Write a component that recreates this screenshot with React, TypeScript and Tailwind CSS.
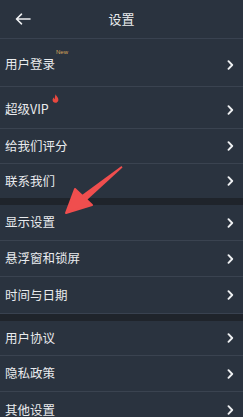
import React from 'react';

const font = { fontFamily: '"Noto Sans CJK SC", "Noto Sans", sans-serif' };

function Chevron() {
  return (
    <svg width="7" height="10" viewBox="0 0 7 10" className="shrink-0">
      <path d="M1.5 1.2 L5.2 5 L1.5 8.8" fill="none" stroke="#eef0f2" strokeWidth="1.9" strokeLinecap="round" strokeLinejoin="round" />
    </svg>
  );
}

function Row({ label, h, extra, last }: { label: string; h: string; extra?: React.ReactNode; last?: boolean }) {
  return (
    <div className={`flex items-center justify-between pl-[5px] pr-[9px] ${h} ${last ? '' : 'border-b border-[#3a4350]'}`}>
      <div className="relative flex items-center">
        <span className="text-[12.5px] text-[#e9ebee] leading-none">{label}</span>
        {extra}
      </div>
      <Chevron />
    </div>
  );
}

export default function App() {
  return (
    <div className="relative w-[243px] h-[417px] overflow-hidden bg-[#2a333f]" style={font}>
      {/* header */}
      <div className="relative flex items-center justify-center h-[39px] border-b border-[#394250]">
        <svg width="16" height="12" viewBox="0 0 16 12" className="absolute left-[15px] top-[13px]">
          <path d="M15 6 H1.8 M6.5 1.2 L1.5 6 L6.5 10.8" fill="none" stroke="#eef0f2" strokeWidth="1.6" strokeLinecap="round" strokeLinejoin="round" />
        </svg>
        <span className="text-[13px] text-[#e9ebee]">设置</span>
      </div>

      <Row
        label="用户登录"
        h="h-[48px] pt-[4px]"
        extra={<span className="absolute left-[51px] top-[-10px] text-[6px] text-[#d9a55a]" style={{ fontFamily: '"Liberation Sans", sans-serif' }}>New</span>}
      />
      <Row
        label="超级VIP"
        h="h-[42px] pt-[4px]"
        extra={
          <svg width="7" height="9" viewBox="0 0 7 9" className="absolute left-[47px] top-[-9px]">
            <path d="M3.6 0.3 C4 2 6.6 3.4 6.4 6 C6.2 7.9 4.8 8.8 3.4 8.8 C1.7 8.8 0.5 7.6 0.6 5.8 C0.7 4.5 1.5 3.8 1.9 3.4 C2 4.4 2.4 5 2.9 5.2 C2.6 3.6 3.2 1.8 3.6 0.3 Z" fill="#e8483f" />
          </svg>
        }
      />
      <Row label="给我们评分" h="h-[35px]" />
      <Row label="联系我们" h="h-[34px]" last />

      <div className="h-[7px] bg-[#1f242b]" />

      <Row label="显示设置" h="h-[36px]" />
      <Row label="悬浮窗和锁屏" h="h-[36px]" />
      <Row label="时间与日期" h="h-[36px]" last />

      <div className="h-[8px] bg-[#1f242b] border-t border-[#394250]" />

      <Row label="用户协议" h="h-[35px]" />
      <Row label="隐私政策" h="h-[36px]" />
      <Row label="其他设置" h="h-[36px]" last />

      {/* red annotation arrow */}
      <svg width="243" height="417" viewBox="0 0 243 417" className="absolute left-0 top-0 pointer-events-none">
        <path d="M121.5 166 L122.5 167.5 L87 200 L82 195 Z" fill="#f04e4e" />
        <path d="M66 213 L75 189 L92 205 Z" fill="#f04e4e" stroke="#f04e4e" strokeWidth="2" strokeLinejoin="round" />
      </svg>
    </div>
  );
}
